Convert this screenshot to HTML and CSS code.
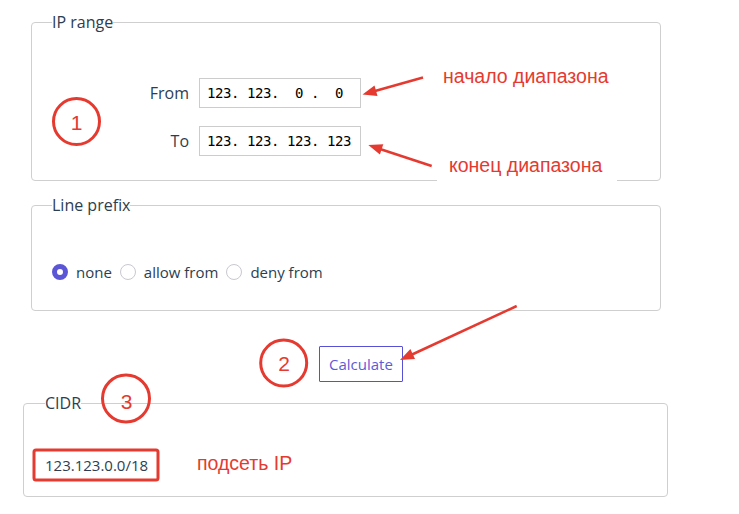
FILE: index.html
```html
<!DOCTYPE html>
<html lang="en">
<head>
<meta charset="utf-8">
<title>IP range to CIDR</title>
<link rel="stylesheet" href="styles.css">
</head>
<body>
<div class="page">
  <fieldset class="fs fs-range">
    <legend>IP range</legend>
    <div class="range-grid">
      <label class="range-label">From</label>
      <div class="ip-input">123. 123.  0 .  0</div>
      <label class="range-label">To</label>
      <div class="ip-input">123. 123. 123. 123</div>
    </div>
  </fieldset>

  <fieldset class="fs fs-prefix">
    <legend>Line prefix</legend>
    <div class="radio-row">
      <label class="radio-item"><input type="radio" name="prefix" checked><span>none</span></label>
      <label class="radio-item"><input type="radio" name="prefix"><span>allow from</span></label>
      <label class="radio-item"><input type="radio" name="prefix"><span>deny from</span></label>
    </div>
  </fieldset>

  <button class="calc" type="button">Calculate</button>

  <fieldset class="fs fs-cidr">
    <legend>CIDR</legend>
    <div class="cidr-value">123.123.0.0/18</div>
  </fieldset>

  <svg class="annotations" width="739" height="514" viewBox="0 0 739 514">
    <g class="mark">
      <circle cx="76.5" cy="121.5" r="23"/>
      <circle cx="283.7" cy="363" r="23"/>
      <circle cx="126" cy="398.5" r="23.5"/>
      <rect x="34" y="450" width="124" height="30" rx="2"/>
      <line x1="423" y1="77.5" x2="375" y2="91"/>
      <line x1="431.7" y1="166" x2="380" y2="149"/>
      <line x1="516.7" y1="306" x2="411" y2="355"/>
    </g>
    <g class="head">
      <polygon points="362.5,94.5 377.5,96.0 374.5,85.4"/>
      <polygon points="368.3,145 383.3,144.2 379.9,154.6"/>
      <polygon points="400,360 415.0,359.1 410.4,349.1"/>
    </g>
    <rect class="mask" x="437" y="150" width="180" height="33"/>
    <g class="note">
      <text class="num" x="76.5" y="130" text-anchor="middle">1</text>
      <text class="num" x="284" y="371" text-anchor="middle">2</text>
      <text class="num" x="126.5" y="409" text-anchor="middle">3</text>
      <text x="443" y="83">начало диапазона</text>
      <text x="449" y="172">конец диапазона</text>
      <text x="197" y="470">подсеть IP</text>
    </g>
  </svg>
</div>
</body>
</html>
```

FILE: styles.css
```css
* {
  box-sizing: border-box;
}

html, body {
  margin: 0;
  padding: 0;
  background: #ffffff;
}

body {
  font-family: "Open Sans", "Noto Sans", sans-serif;
  color: #2c3e50;
}

.page {
  position: relative;
  width: 739px;
  height: 514px;
  padding-top: 12px;
  display: flex;
  flex-direction: column;
  align-items: flex-start;
}

.fs {
  margin: 0;
  border: 1px solid #cfcfcf;
  border-radius: 4px;
  min-inline-size: 0;
}

.fs legend {
  padding: 0;
  font-size: 16px;
  line-height: 20px;
  color: #2c3e50;
}

.fs-range {
  margin-left: 31px;
  width: 630px;
  padding: 46px 20px 24px 20px;
}

.range-grid {
  display: grid;
  grid-template-columns: 137px 162px;
  grid-auto-rows: 30px;
  column-gap: 10px;
  row-gap: 18px;
}

.range-label {
  justify-self: end;
  align-self: center;
  font-size: 16px;
  line-height: 20px;
  margin-top: -1px;
}

.ip-input {
  border: 1px solid #cccccc;
  padding: 0 0 0 7px;
  font-family: "DejaVu Sans Mono", monospace;
  font-size: 14px;
  letter-spacing: -0.43px;
  line-height: 28px;
  color: #000000;
  white-space: pre;
}

.fs-prefix {
  margin-top: 14px;
  margin-left: 31px;
  width: 630px;
  padding: 47px 20px 28px 20px;
}

.radio-row {
  display: flex;
  align-items: center;
  height: 20px;
  gap: 8px;
  font-size: 15px;
}

.radio-item {
  display: flex;
  align-items: center;
  gap: 8px;
  line-height: 20px;
}

.radio-item input {
  appearance: none;
  -webkit-appearance: none;
  margin: 0;
  width: 16px;
  height: 16px;
  border-radius: 50%;
  border: 1px solid #c8c8d0;
  background: #ffffff;
}

.radio-item input:checked {
  border: 5px solid #5b56d6;
  background: #ffffff;
}

.calc {
  margin-top: 35px;
  margin-left: 319px;
  height: 36px;
  padding: 0 9px;
  border: 1px solid #5751d6;
  border-radius: 1px;
  background: #ffffff;
  color: #5f5ad8;
  font-family: "Open Sans", "Noto Sans", sans-serif;
  font-size: 15px;
  line-height: 20px;
}

.fs-cidr {
  margin-top: 11px;
  margin-left: 23px;
  width: 645px;
  padding: 42px 21px 21px 21px;
}

.cidr-value {
  font-size: 15px;
  line-height: 20px;
  color: #2c3e50;
}

.annotations {
  position: absolute;
  left: 0;
  top: 0;
  pointer-events: none;
}

.annotations .mark {
  fill: none;
  stroke: #e53a30;
  stroke-width: 3;
}

.annotations .mark line {
  stroke-width: 2.5;
}

.annotations .head {
  fill: #e53a30;
}

.annotations .mask {
  fill: #ffffff;
}

.annotations .note {
  fill: #e53a30;
  font-family: "Liberation Sans", Arial, sans-serif;
  font-size: 19.5px;
}

.annotations .note .num {
  font-size: 21px;
}
```
